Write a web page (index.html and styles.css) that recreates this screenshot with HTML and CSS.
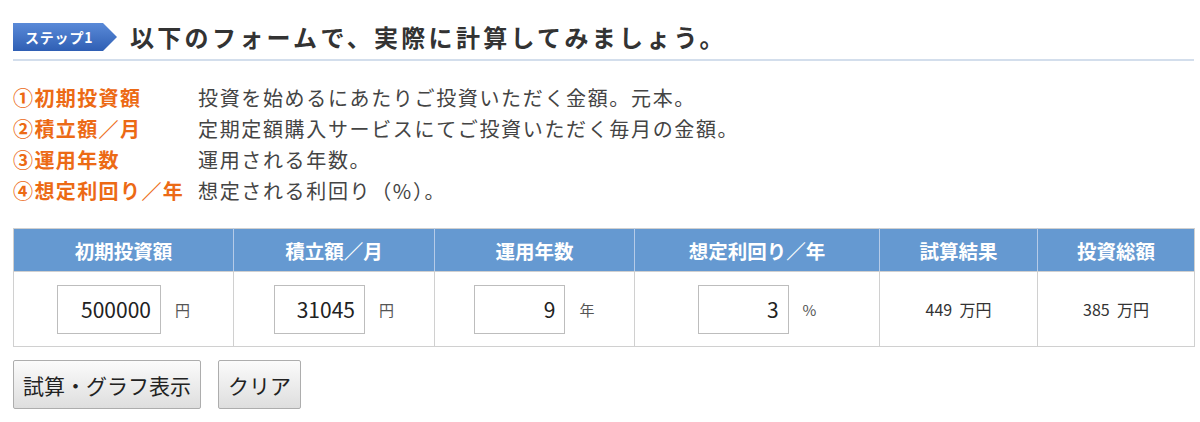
FILE: index.html
```html
<!DOCTYPE html>
<html lang="ja">
<head>
<meta charset="utf-8">
<link rel="stylesheet" href="styles.css">
</head>
<body>
<div class="wrap">
  <div class="heading">
    <div class="badge">ステップ1</div>
    <h1 class="title">以下のフォームで、実際に計算してみましょう。</h1>
  </div>
  <dl class="defs">
    <div class="def"><dt>①初期投資額</dt><dd>投資を始めるにあたりご投資いただく金額。元本。</dd></div>
    <div class="def"><dt>②積立額／月</dt><dd>定期定額購入サービスにてご投資いただく毎月の金額。</dd></div>
    <div class="def"><dt>③運用年数</dt><dd>運用される年数。</dd></div>
    <div class="def"><dt>④想定利回り／年</dt><dd>想定される利回り（%）。</dd></div>
  </dl>
  <table class="calc">
    <colgroup>
      <col class="c1"><col class="c2"><col class="c3"><col class="c4"><col class="c5"><col class="c6">
    </colgroup>
    <thead>
      <tr>
        <th>初期投資額</th><th>積立額／月</th><th>運用年数</th><th>想定利回り／年</th><th>試算結果</th><th>投資総額</th>
      </tr>
    </thead>
    <tbody>
      <tr>
        <td><span class="field"><input class="num wide" type="text" value="500000"><span class="unit">円</span></span></td>
        <td><span class="field"><input class="num" type="text" value="31045"><span class="unit">円</span></span></td>
        <td><span class="field"><input class="num" type="text" value="9"><span class="unit">年</span></span></td>
        <td><span class="field"><input class="num" type="text" value="3"><span class="unit">%</span></span></td>
        <td class="result">449&nbsp;&nbsp;万円</td>
        <td class="result">385&nbsp;&nbsp;万円</td>
      </tr>
    </tbody>
  </table>
  <div class="actions">
    <button class="btn" type="button">試算・グラフ表示</button>
    <button class="btn" type="button">クリア</button>
  </div>
</div>
</body>
</html>
```

FILE: styles.css
```css
html, body {
  margin: 0;
  padding: 0;
  background: #fff;
}
body {
  font-family: "Noto Sans CJK JP", "Noto Sans", sans-serif;
  color: #333;
}
.wrap {
  width: 1181px;
  padding: 23px 0 0 13px;
}
.heading {
  display: flex;
  align-items: center;
  gap: 13px;
  padding-bottom: 8px;
  border-bottom: 2px solid #d3deec;
}
.badge {
  width: 104px;
  height: 28px;
  box-sizing: border-box;
  padding-left: 12px;
  display: flex;
  align-items: center;
  font-size: 14px;
  font-weight: bold;
  color: #fff;
  letter-spacing: 0.8px;
  background: linear-gradient(#5a8ad8, #2f5fb4);
  clip-path: polygon(0 0, 90px 0, 104px 50%, 90px 100%, 0 100%);
}
.title {
  margin: 0;
  font-size: 24px;
  line-height: 28px;
  font-weight: bold;
  letter-spacing: 3.3px;
  color: #333;
}
.defs {
  margin: 21px 0 0;
  padding: 0;
}
.def {
  display: flex;
  line-height: 31px;
  font-size: 20px;
  letter-spacing: 1.65px;
}
.def dt {
  width: 185px;
  flex: none;
  color: #ec6a15;
  font-weight: bold;
  white-space: nowrap;
  letter-spacing: 1.4px;
}
.def dd {
  margin: 0;
  color: #444;
}
.calc {
  margin-top: 22px;
  width: 1181px;
  border-collapse: collapse;
  table-layout: fixed;
}
.c1 { width: 220px; }
.c2 { width: 201px; }
.c3 { width: 200px; }
.c4 { width: 245px; }
.c5 { width: 158px; }
.c6 { width: 157px; }
.calc th {
  height: 42px;
  padding: 0;
  background: #6599d1;
  color: #fff;
  font-size: 19.5px;
  font-weight: bold;
  border: 1px solid #d0d0d0;
  border-left-color: #b5cbe8;
  border-right-color: #b5cbe8;
}
.calc th:first-child { border-left-color: #d0d0d0; }
.calc th:last-child { border-right-color: #d0d0d0; }
.calc td {
  height: 74px;
  padding: 0;
  text-align: center;
  border: 1px solid #d0d0d0;
}
.field {
  display: inline-flex;
  align-items: center;
  gap: 14px;
}
.num {
  width: 91px;
  height: 49px;
  box-sizing: border-box;
  border: 1px solid #bdbdbd;
  padding: 0 9px 0 0;
  margin: 0;
  text-align: right;
  font-family: "Noto Sans CJK JP", "Noto Sans", sans-serif;
  font-size: 21px;
  color: #222;
  background: #fff;
}
.num.wide { width: 104px; }
.unit {
  font-size: 15px;
  color: #555;
}
.result {
  font-size: 16px;
  color: #333;
}
.actions {
  display: flex;
  gap: 17px;
  margin-top: 13px;
}
.btn {
  height: 49px;
  padding: 0 9px;
  margin: 0;
  font-family: "Noto Sans CJK JP", "Noto Sans", sans-serif;
  font-size: 21px;
  color: #222;
  background: linear-gradient(#fbfbfb, #dedede);
  border: 1px solid #adadad;
  border-radius: 2px;
}
```
